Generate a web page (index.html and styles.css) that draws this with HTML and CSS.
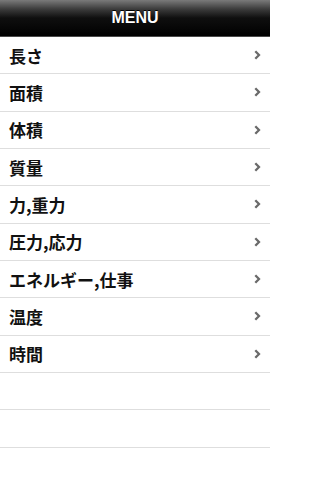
FILE: index.html
```html
<!DOCTYPE html>
<html lang="ja">
<head>
<meta charset="utf-8">
<title>MENU</title>
<link rel="stylesheet" href="styles.css">
</head>
<body>
<header class="bar"><h1 class="title">MENU</h1></header>
<ul class="list">
  <li class="row"><span class="label">長さ</span><svg class="chev" viewBox="0 0 7 10"><path d="M1.3 1.2 L5 5 L1.3 8.8" fill="none" stroke="#6a6a6a" stroke-width="2.3"/></svg></li>
  <li class="row"><span class="label">面積</span><svg class="chev" viewBox="0 0 7 10"><path d="M1.3 1.2 L5 5 L1.3 8.8" fill="none" stroke="#6a6a6a" stroke-width="2.3"/></svg></li>
  <li class="row"><span class="label">体積</span><svg class="chev" viewBox="0 0 7 10"><path d="M1.3 1.2 L5 5 L1.3 8.8" fill="none" stroke="#6a6a6a" stroke-width="2.3"/></svg></li>
  <li class="row"><span class="label">質量</span><svg class="chev" viewBox="0 0 7 10"><path d="M1.3 1.2 L5 5 L1.3 8.8" fill="none" stroke="#6a6a6a" stroke-width="2.3"/></svg></li>
  <li class="row"><span class="label">力,重力</span><svg class="chev" viewBox="0 0 7 10"><path d="M1.3 1.2 L5 5 L1.3 8.8" fill="none" stroke="#6a6a6a" stroke-width="2.3"/></svg></li>
  <li class="row"><span class="label">圧力,応力</span><svg class="chev" viewBox="0 0 7 10"><path d="M1.3 1.2 L5 5 L1.3 8.8" fill="none" stroke="#6a6a6a" stroke-width="2.3"/></svg></li>
  <li class="row"><span class="label">エネルギー,仕事</span><svg class="chev" viewBox="0 0 7 10"><path d="M1.3 1.2 L5 5 L1.3 8.8" fill="none" stroke="#6a6a6a" stroke-width="2.3"/></svg></li>
  <li class="row"><span class="label">温度</span><svg class="chev" viewBox="0 0 7 10"><path d="M1.3 1.2 L5 5 L1.3 8.8" fill="none" stroke="#6a6a6a" stroke-width="2.3"/></svg></li>
  <li class="row"><span class="label">時間</span><svg class="chev" viewBox="0 0 7 10"><path d="M1.3 1.2 L5 5 L1.3 8.8" fill="none" stroke="#6a6a6a" stroke-width="2.3"/></svg></li>
  <li class="row empty"></li>
  <li class="row empty"></li>
  <li class="row empty"></li>
</ul>
</body>
</html>
```
FILE: styles.css
```css
html, body {
  margin: 0;
  padding: 0;
  background: #ffffff;
  width: 270px;
  height: 480px;
  overflow: hidden;
  font-family: "Liberation Sans", "Noto Sans CJK JP", sans-serif;
}
.bar {
  height: 37px;
  box-sizing: border-box;
  background: linear-gradient(to bottom, #7a7a7a 0%, #3c3c3c 25%, #0f0f0f 50%, #000000 100%);
  border-bottom: 1px solid #4a4a4a;
  display: flex;
  align-items: center;
  justify-content: center;
}
.title {
  margin: 0;
  color: #ffffff;
  font-size: 16px;
  font-weight: bold;
  text-shadow: 0 -1px 0 #000;
}
.list {
  list-style: none;
  margin: 0;
  padding: 0;
}
.row {
  height: 37.33px;
  box-sizing: border-box;
  border-bottom: 1px solid #dedede;
  display: flex;
  align-items: center;
  justify-content: space-between;
  padding: 0 9px 0 9px;
}
.label {
  font-family: "Noto Sans CJK JP", "Liberation Sans", sans-serif;
  font-weight: bold;
  font-size: 17px;
  color: #111111;
}
.chev {
  width: 7px;
  height: 10px;
}
```
